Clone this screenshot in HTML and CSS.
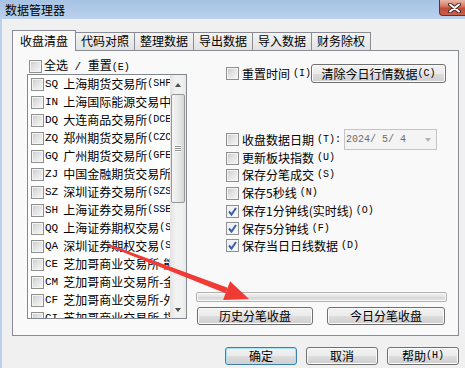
FILE: index.html
```html
<!DOCTYPE html>
<html lang="zh-CN">
<head>
<meta charset="utf-8">
<title>数据管理器</title>
<link rel="stylesheet" href="styles.css">
</head>
<body>
<div class="window">
  <div class="titlebar">
    <span class="title">数据管理器</span>
    <div class="close">
      <svg width="13" height="10" viewBox="0 0 13 10"><path d="M2 1.5 L11 8.5 M11 1.5 L2 8.5" stroke="#4a2a26" stroke-width="4" stroke-linecap="round"/><path d="M2 1.5 L11 8.5 M11 1.5 L2 8.5" stroke="#ffffff" stroke-width="2" stroke-linecap="round"/></svg>
    </div>
  </div>
  <div class="client">
    <div class="tabs">
      <div class="tab active">收盘清盘</div>
      <div class="tab">代码对照</div>
      <div class="tab">整理数据</div>
      <div class="tab">导出数据</div>
      <div class="tab">导入数据</div>
      <div class="tab">财务除权</div>
    </div>
    <div class="panel">
      <div class="left">
        <label class="selall"><span class="cb"></span><span>全选<span class="en sp"> / </span>重置<span class="en">(E)</span></span></label>
        <div class="listbox">
          <ul class="items">
            <li><span class="cb"></span><span class="code">SQ</span>上海期货交易所<span class="en">(SHFE)</span></li>
            <li><span class="cb"></span><span class="code">IN</span>上海国际能源交易中心</li>
            <li><span class="cb"></span><span class="code">DQ</span>大连商品交易所<span class="en">(DCE)</span></li>
            <li><span class="cb"></span><span class="code">ZQ</span>郑州期货交易所<span class="en">(CZCE)</span></li>
            <li><span class="cb"></span><span class="code">GQ</span>广州期货交易所<span class="en">(GFEX)</span></li>
            <li><span class="cb"></span><span class="code">ZJ</span>中国金融期货交易所</li>
            <li><span class="cb"></span><span class="code">SZ</span>深圳证券交易所<span class="en">(SZSE)</span></li>
            <li><span class="cb"></span><span class="code">SH</span>上海证券交易所<span class="en">(SSE)</span></li>
            <li><span class="cb"></span><span class="code">QQ</span>上海证券期权交易<span class="en">(SSE)</span></li>
            <li><span class="cb"></span><span class="code">QA</span>深圳证券期权交易<span class="en">(SZSE)</span></li>
            <li><span class="cb"></span><span class="code">CE</span>芝加哥商业交易所-能源</li>
            <li><span class="cb"></span><span class="code">CM</span>芝加哥商业交易所-金属</li>
            <li><span class="cb"></span><span class="code">CF</span>芝加哥商业交易所-外汇</li>
            <li><span class="cb"></span><span class="code">CI</span>芝加哥商业交易所-指数</li>
          </ul>
          <div class="vscroll">
            <div class="sb-btn up"></div>
            <div class="track"><div class="thumb"><span class="grip"></span></div></div>
            <div class="sb-btn down"></div>
          </div>
        </div>
      </div>
      <div class="right">
        <div class="row-top">
          <label class="opt"><span class="cb"></span>重置时间<span class="en">(I)</span></label>
          <button class="btn btn-clear">清除今日行情数据<span class="en">(C)</span></button>
        </div>
        <div class="row-date">
          <label class="opt"><span class="cb"></span>收盘数据日期<span class="en">(T):</span></label>
          <div class="combo"><span class="combo-text">2024/ 5/ 4</span><span class="combo-arrow"></span></div>
        </div>
        <label class="opt opt-row h16"><span class="cb"></span>更新板块指数<span class="en">(U)</span></label>
        <label class="opt opt-row"><span class="cb"></span>保存分笔成交<span class="en">(S)</span></label>
        <label class="opt opt-row"><span class="cb"></span>保存5秒线<span class="en">(N)</span></label>
        <label class="opt opt-row"><span class="cb on"><svg width="11" height="11" viewBox="0 0 11 11"><path d="M2 5.5 L4.5 8.5 L9 2" fill="none" stroke="#3d5fa8" stroke-width="2"/></svg></span>保存1分钟线(实时线)<span class="en">(O)</span></label>
        <label class="opt opt-row h17"><span class="cb on"><svg width="11" height="11" viewBox="0 0 11 11"><path d="M2 5.5 L4.5 8.5 L9 2" fill="none" stroke="#3d5fa8" stroke-width="2"/></svg></span>保存5分钟线<span class="en">(F)</span></label>
        <label class="opt opt-row h17"><span class="cb on"><svg width="11" height="11" viewBox="0 0 11 11"><path d="M2 5.5 L4.5 8.5 L9 2" fill="none" stroke="#3d5fa8" stroke-width="2"/></svg></span>保存当日日线数据<span class="en">(D)</span></label>
        <div class="progress"></div>
        <div class="actions">
          <button class="btn btn-hist">历史分笔收盘</button>
          <button class="btn btn-today">今日分笔收盘</button>
        </div>
      </div>
    </div>
    <div class="footer">
      <button class="btn btn-foot default">确定</button>
      <button class="btn btn-foot">取消</button>
      <button class="btn btn-foot">帮助<span class="en">(H)</span></button>
    </div>
  </div>
  <svg class="annot" width="465" height="368" viewBox="0 0 465 368">
    <polygon points="107.6,245.9 108.4,244.1 227.7,287.7 225.5,293.3" fill="#ef3b33"/>
    <polygon points="230.1,281.2 249,299 223.1,299.9" fill="#ef3b33"/>
  </svg>
</div>
</body>
</html>
```
FILE: styles.css
```css
* { box-sizing: border-box; margin: 0; padding: 0; }
html, body { width: 465px; height: 368px; overflow: hidden; }
body {
  background: #f0f0f0;
  font-family: "Noto Sans CJK SC", "Noto Sans", sans-serif;
  font-size: 12px;
  line-height: 16px;
  color: #000;
}
.window { position: relative; width: 465px; height: 368px; display: flex; flex-direction: column; }

.titlebar {
  height: 19px;
  flex: none;
  display: flex;
  align-items: flex-start;
  background: linear-gradient(#a6c2e4, #bad1ec);
}
.title { padding: 2px 0 0 5px; line-height: 15px; }
.close {
  margin-left: auto;
  width: 26px;
  height: 16px;
  border: 1px solid #6e2c24;
  border-top: none;
  border-right: none;
  border-radius: 0 0 0 4px;
  background: linear-gradient(#e9b6a8 0%, #d98672 35%, #c24a37 58%, #cc6048 100%);
  display: flex;
  align-items: center;
  padding-left: 8px;
}
.close svg { display: block; }

.client {
  flex: 1;
  border-left: 2px solid #b9d1ea;
  padding: 11px 6px 0 10px;
  display: flex;
  flex-direction: column;
}

.tabs { display: flex; align-items: flex-end; height: 20px; position: relative; z-index: 1; }
.tab {
  height: 18px;
  padding: 0 5px;
  margin-left: -1px;
  border: 1px solid #898c95;
  border-bottom: none;
  background: linear-gradient(#f3f3f3, #e2e2e2);
  line-height: 16px;
  white-space: nowrap;
}
.tab.active {
  height: 21px;
  margin: 0 0 -1px 0;
  padding: 0 7px;
  background: #f9f9f9;
  position: relative;
  z-index: 2;
  line-height: 19px;
}

.panel {
  height: 286px;
  flex: none;
  border: 1px solid #898c95;
  background: #f9f9f9;
  display: flex;
  padding: 7px 10px 0 14px;
}

.en { font-family: "Liberation Mono", monospace; font-size: 10px; }
.en.sp { white-space: pre; font-size: 11px; }

.cb {
  flex: none;
  width: 13px;
  height: 13px;
  border: 1px solid #8e8f8f;
  background: linear-gradient(135deg, #c8c8c8 0%, #e2e2e2 45%, #f8f8f8 100%);
  box-shadow: inset 0 0 0 1px #f4f4f4;
  display: inline-flex;
  align-items: center;
  justify-content: center;
}
.cb.on { background: linear-gradient(135deg, #e9ecf2, #fafafa); }
.cb svg { display: block; }

.left { width: 160px; flex: none; display: flex; flex-direction: column; }
.selall { height: 16px; display: flex; align-items: center; gap: 2px; padding-left: 2px; white-space: nowrap; }

.listbox {
  width: 160px;
  height: 245px;
  border: 1px solid #828790;
  background: #fff;
  display: flex;
}
.items { flex: 1; list-style: none; overflow: hidden; }
.items li {
  height: 18px;
  display: flex;
  align-items: center;
  padding-left: 3px;
  white-space: nowrap;
}
.code { font-family: "Liberation Mono", monospace; font-size: 11px; margin: 0 5px 0 1px; }

.vscroll {
  width: 16px;
  flex: none;
  display: flex;
  flex-direction: column;
  background: linear-gradient(90deg, #e4e4e4, #f1f1f1 35%, #f1f1f1 70%, #e9e9e9);
}
.sb-btn { height: 17px; display: flex; align-items: center; justify-content: center; }
.sb-btn.up::after {
  content: "";
  border-left: 3.5px solid transparent;
  border-right: 3.5px solid transparent;
  border-bottom: 4px solid #4d4d4d;
  margin-top: 3px;
}
.sb-btn.down::after {
  content: "";
  border-left: 3.5px solid transparent;
  border-right: 3.5px solid transparent;
  border-top: 4px solid #4d4d4d;
}
.track { flex: 1; padding: 2px 1px 0 1px; }
.thumb {
  height: 109px;
  border: 1px solid #979797;
  border-radius: 2px;
  background: linear-gradient(90deg, #f5f5f5, #e9e9e9 50%, #d7d7d7);
  display: flex;
  align-items: center;
  justify-content: center;
}
.grip {
  width: 6px;
  height: 7px;
  background: repeating-linear-gradient(#fbfbfb 0 1px, #8d8d8d 1px 2px);
}

.right { width: 251px; flex: none; margin-left: 9px; display: flex; flex-direction: column; }
.opt { display: flex; align-items: center; gap: 3px; white-space: nowrap; }
.row-top { margin-top: 6px; height: 19px; display: flex; align-items: center; padding-left: 30px; }
.row-date { margin-top: 46px; height: 21px; display: flex; align-items: center; padding-left: 30px; }
.opt-row { height: 18px; padding-left: 30px; }
.opt-row.h16 { height: 16px; }
.opt-row.h17 { height: 17px; }

.btn {
  font: inherit;
  color: #000;
  border: 1px solid #707070;
  border-radius: 3px;
  background: linear-gradient(#f2f2f2 0%, #ebebeb 50%, #dddddd 51%, #cfcfcf 100%);
  box-shadow: inset 0 0 0 1px #fbfbfb;
  display: flex;
  align-items: center;
  justify-content: center;
  white-space: nowrap;
  line-height: 16px;
}
.btn-clear { margin-left: auto; margin-right: 1px; width: 138px; height: 19px; }

.combo {
  margin-left: auto;
  margin-right: 10px;
  width: 93px;
  height: 21px;
  border: 1px solid #c5c5c5;
  background: #f4f4f4;
  display: flex;
  align-items: center;
  padding-left: 1px;
}
.combo-text { flex: 1; font-family: "Liberation Mono", monospace; font-size: 10px; color: #6d6d6d; white-space: pre; }
.combo-arrow {
  margin-right: 5px;
  border-left: 3.5px solid transparent;
  border-right: 3.5px solid transparent;
  border-top: 4px solid #b5b5b5;
}

.progress {
  margin-top: 38px;
  height: 10px;
  border: 1px solid #b2b2b2;
  border-radius: 2px;
  background: linear-gradient(#f3f3f3, #e2e2e2 50%, #d6d6d6 51%, #e6e6e6);
  box-shadow: inset 0 0 0 1px #f7f7f7;
}
.actions { margin-top: 5px; display: flex; justify-content: space-between; padding: 0 2px 0 1px; }
.btn-hist { width: 116px; height: 18px; }
.btn-today { width: 118px; height: 18px; }

.footer { margin-top: 11px; display: flex; justify-content: flex-end; gap: 9px; }
.btn-foot { width: 72px; height: 18px; }
.btn-foot.default { border-color: #3c7fb1; box-shadow: inset 0 0 0 1px #a9e1f7; }

.annot { position: absolute; left: 0; top: 0; pointer-events: none; }
```
